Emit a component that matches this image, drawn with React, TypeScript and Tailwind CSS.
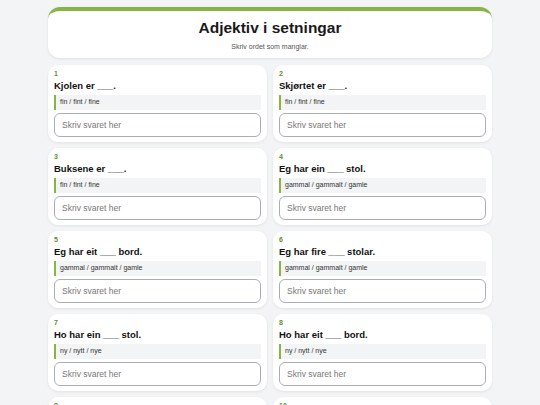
const ITEMS = [
  { n: 1, text: "Kjolen er ___.", hint: "fin / fint / fine" },
  { n: 2, text: "Skjørtet er ___.", hint: "fin / fint / fine" },
  { n: 3, text: "Buksene er ___.", hint: "fin / fint / fine" },
  { n: 4, text: "Eg har ein ___ stol.", hint: "gammal / gammalt / gamle" },
  { n: 5, text: "Eg har eit ___ bord.", hint: "gammal / gammalt / gamle" },
  { n: 6, text: "Eg har fire ___ stolar.", hint: "gammal / gammalt / gamle" },
  { n: 7, text: "Ho har ein ___ stol.", hint: "ny / nytt / nye" },
  { n: 8, text: "Ho har eit ___ bord.", hint: "ny / nytt / nye" },
  { n: 9, text: "Ho har fire ___ stolar.", hint: "ny / nytt / nye" },
  { n: 10, text: "Huset er ___.", hint: "stor / stort / store" },
];

export default function App() {
  return (
    <div className="min-h-screen bg-[#f3f4f6] pt-[7px] pb-6 font-['Liberation_Sans',Arial,sans-serif]">
      <div className="mx-auto w-[444px]">
        <div className="rounded-[12px] border-t-4 border-[#86b545] bg-white px-4 pt-[7px] pb-[6px] text-center shadow-[0_1px_3px_rgba(0,0,0,0.08)]">
          <h1 className="text-[15.5px] leading-[20px] font-bold text-[#1a1a1a]">
            Adjektiv i setningar
          </h1>
          <p className="mt-[4px] text-[7px] leading-[10px] text-[#555]">
            Skriv ordet som manglar.
          </p>
        </div>

        <div className="mt-[7px] grid grid-cols-2 gap-[6px]">
          {ITEMS.map((it) => (
            <div
              key={it.n}
              className="rounded-[10px] bg-white px-[6px] pt-[4px] pb-[5px] shadow-[0_1px_3px_rgba(0,0,0,0.08)]"
            >
              <div className="text-[7px] leading-[9px] font-bold text-[#5f8f2e]">
                {it.n}
              </div>
              <div className="mt-[2px] text-[9.5px] leading-[12px] font-bold text-[#111]">
                {it.text}
              </div>
              <div className="mt-[3px] flex h-[15px] items-center border-l-2 border-[#86b545] bg-[#f3f4f5] pl-[4px] text-[7px] text-[#333]">
                {it.hint}
              </div>
              <input
                type="text"
                placeholder="Skriv svaret her"
                className="mt-[3px] block h-[24px] w-full rounded-[6px] border-[1.5px] border-[#a9aeb6] bg-white px-[7px] text-[8.5px] text-[#333] placeholder:text-[#777] outline-none"
              />
            </div>
          ))}
        </div>
      </div>
    </div>
  );
}
